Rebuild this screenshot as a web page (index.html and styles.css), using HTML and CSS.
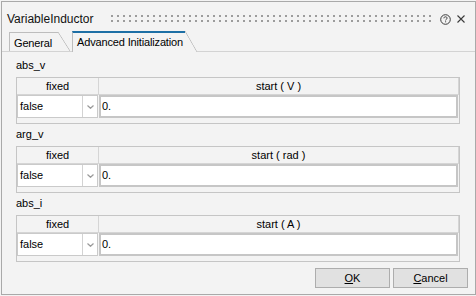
FILE: index.html
```html
<!DOCTYPE html>
<html>
<head>
<meta charset="utf-8">
<link rel="stylesheet" href="styles.css">
</head>
<body>
<div class="win">
  <div class="titlebar">
    <span class="title">VariableInductor</span>
    <span class="grip"></span>
    <svg class="help" width="11" height="11" viewBox="0 0 11 11"><circle cx="5.5" cy="5.5" r="4.8" fill="none" stroke="#3a3a3a" stroke-width="1"/><path d="M3.9 4.3 C3.9 3.3 4.6 2.8 5.5 2.8 C6.4 2.8 7.1 3.3 7.1 4.2 C7.1 5.2 5.6 5.3 5.6 6.4" fill="none" stroke="#3a3a3a" stroke-width="1"/><rect x="5.1" y="7.3" width="1" height="1" fill="#3a3a3a"/></svg>
    <svg class="close" width="8" height="8" viewBox="0 0 8 8"><path d="M0.5 0.5 L7.5 7.5 M7.5 0.5 L0.5 7.5" stroke="#3a3a3a" stroke-width="1.1"/></svg>
  </div>
  <div class="tabs">
    <div class="tab">
      <span class="tab-label">General</span><span class="slant"></span>
    </div>
    <div class="tab active">
      <span class="tab-label">Advanced Initialization</span><span class="slant"></span>
    </div>
  </div>
  <div class="pane">
    <section class="group">
      <div class="group-label">abs_v</div>
      <div class="tbl">
        <div class="th">fixed</div>
        <div class="th">start ( V )</div>
        <div class="combo"><span class="combo-text">false</span><span class="combo-btn"><svg width="7" height="4" viewBox="0 0 7 4"><path d="M0.5 0.5 L3.5 3.3 L6.5 0.5" fill="none" stroke="#9a9a9a" stroke-width="1.2"/></svg></span></div>
        <div class="edit">0.</div>
      </div>
    </section>
    <section class="group">
      <div class="group-label">arg_v</div>
      <div class="tbl">
        <div class="th">fixed</div>
        <div class="th">start ( rad )</div>
        <div class="combo"><span class="combo-text">false</span><span class="combo-btn"><svg width="7" height="4" viewBox="0 0 7 4"><path d="M0.5 0.5 L3.5 3.3 L6.5 0.5" fill="none" stroke="#9a9a9a" stroke-width="1.2"/></svg></span></div>
        <div class="edit">0.</div>
      </div>
    </section>
    <section class="group">
      <div class="group-label">abs_i</div>
      <div class="tbl">
        <div class="th">fixed</div>
        <div class="th">start ( A )</div>
        <div class="combo"><span class="combo-text">false</span><span class="combo-btn"><svg width="7" height="4" viewBox="0 0 7 4"><path d="M0.5 0.5 L3.5 3.3 L6.5 0.5" fill="none" stroke="#9a9a9a" stroke-width="1.2"/></svg></span></div>
        <div class="edit">0.</div>
      </div>
    </section>
  </div>
  <div class="buttons">
    <button class="btn"><u>O</u>K</button>
    <button class="btn"><u>C</u>ancel</button>
  </div>
</div>
</body>
</html>
```
FILE: styles.css
```css
html, body {
  margin: 0;
  padding: 0;
  background: #f3f3f3;
}
body {
  width: 476px;
  height: 296px;
  overflow: hidden;
  font-family: "Liberation Sans", Arial, sans-serif;
  font-size: 11px;
  color: #000;
}
.win {
  box-sizing: border-box;
  margin: 1px 0 0 1px;
  width: 475px;
  height: 294px;
  border: 1px solid #a9a9a9;
  background: #f3f3f3;
  display: flex;
  flex-direction: column;
}
.titlebar {
  display: flex;
  align-items: flex-start;
  height: 15px;
  padding: 10px 10px 0 5px;
}
.title {
  font-size: 12px;
  line-height: 15px;
  color: #111;
}
.grip {
  flex: 1;
  height: 7px;
  margin: 3px 9px 0 17px;
  background-image: conic-gradient(at 2px 2px, transparent 75%, #9c9c9c 0);
  background-size: 6px 5px;
}
.help {
  display: block;
  margin-top: 2px;
}
.close {
  display: block;
  margin: 3px 0 0 6px;
}
.tabs {
  display: flex;
  align-items: flex-end;
  margin-top: 4px;
  height: 20px;
  padding-left: 7px;
  border-bottom: 1px solid #d3d3d3;
}
.tab {
  display: flex;
  height: 19px;
}
.tab-label {
  box-sizing: border-box;
  width: 49px;
  border-top: 1px solid #bdbdbd;
  border-left: 1px solid #bdbdbd;
  padding: 2px 0 0 4px;
  line-height: 16px;
  letter-spacing: -0.15px;
  white-space: nowrap;
}
.slant {
  width: 12px;
  background: linear-gradient(to top right, transparent calc(50% - 0.7px), #bdbdbd 50%, transparent calc(50% + 0.7px));
}
.tab.active {
  height: 21px;
  margin: 0 0 -1px 2px;
  background: #f3f3f3;
}
.tab.active .tab-label {
  width: 113px;
  border-top: 2px solid #1d6fa5;
  padding: 1px 0 2px 4px;
}
.pane {
  padding: 6px 0 0 14px;
}
.group + .group {
  margin-top: 3px;
}
.group-label {
  line-height: 15px;
  margin-bottom: 4px;
}
.tbl {
  box-sizing: border-box;
  width: 444px;
  border: 1px solid #c5c5c5;
  display: grid;
  grid-template-columns: 82px 360px;
  padding-bottom: 5px;
}
.th {
  height: 16px;
  line-height: 16px;
  text-align: center;
  border-right: 1px solid #d5d5d5;
  border-bottom: 1px solid #d5d5d5;
}
.combo {
  box-sizing: border-box;
  width: 81px;
  height: 23px;
  border: 1px solid #cacaca;
  background: #fff;
  display: flex;
}
.combo-text {
  flex: 1;
  padding-left: 2px;
  line-height: 21px;
}
.combo-btn {
  width: 14px;
  border-left: 1px solid #d3d3d3;
  display: flex;
  align-items: center;
  justify-content: center;
}
.combo-btn svg {
  display: block;
}
.edit {
  box-sizing: border-box;
  width: 359px;
  height: 23px;
  border: 2px solid #c6c6c6;
  background: #fff;
  padding-left: 1px;
  line-height: 19px;
}
.buttons {
  display: flex;
  justify-content: flex-end;
  gap: 3px;
  margin-top: 6px;
  padding-right: 7px;
}
.btn {
  box-sizing: border-box;
  width: 75px;
  height: 20px;
  margin: 0;
  padding: 0;
  border: 1px solid #adadad;
  background: #e1e1e1;
  font-family: "Liberation Sans", Arial, sans-serif;
  font-size: 11px;
  color: #000;
  line-height: 18px;
}
```
